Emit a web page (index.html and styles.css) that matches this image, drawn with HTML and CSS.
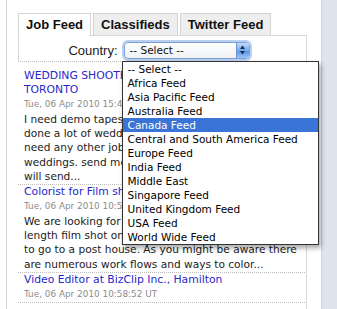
FILE: index.html
```html
<!DOCTYPE html>
<html>
<head>
<meta charset="utf-8">
<title>Job Feed</title>
<link rel="stylesheet" href="styles.css">
</head>
<body>
<div class="page">
  <div class="col">
    <div class="tabs">
      <div class="tab active">Job Feed</div>
      <div class="tab">Classifieds</div>
      <div class="tab">Twitter Feed</div>
    </div>
    <div class="panel">
      <span class="label">Country:</span>
      <div class="select">
        <span class="select-text">-- Select --</span>
        <span class="select-btn"><svg width="5" height="10" viewBox="0 0 5 10"><path d="M0 4 L2.5 0.5 L5 4 Z M0 6 L2.5 9.5 L5 6 Z" fill="#1b2b48"/></svg></span>
        <ul class="dropdown">
          <li>-- Select --</li>
          <li>Africa Feed</li>
          <li>Asia Pacific Feed</li>
          <li>Australia Feed</li>
          <li class="selected">Canada Feed</li>
          <li>Central and South America Feed</li>
          <li>Europe Feed</li>
          <li>India Feed</li>
          <li>Middle East</li>
          <li>Singapore Feed</li>
          <li>United Kingdom Feed</li>
          <li>USA Feed</li>
          <li>World Wide Feed</li>
        </ul>
      </div>
    </div>
    <div class="feed">
      <div class="item">
        <a class="title" href="#">WEDDING SHOOTER &amp; EDITOR WANTED IN<br>TORONTO</a>
        <div class="date">Tue, 06 Apr 2010 15:47:03 UT</div>
        <p class="body">I need demo tapes from someone who has<br>done a lot of weddings before. I do not<br>need any other jobs, just your<br>weddings. send me your reel and I<br>will send...</p>
      </div>
      <div class="item">
        <a class="title" href="#">Colorist for Film shot on RED, Toronto</a>
        <div class="date">Tue, 06 Apr 2010 10:53:41 UT</div>
        <p class="body">We are looking for a colorist for a feature<br>length film shot on RED and we do not want<br>to go to a post house. As you might be aware there<br>are numerous work flows and ways to color...</p>
      </div>
      <div class="item">
        <a class="title" href="#">Video Editor at BizClip Inc., Hamilton</a>
        <div class="date">Tue, 06 Apr 2010 10:58:52 UT</div>
      </div>
    </div>
  </div>
  <div class="strip"></div>
</div>
</body>
</html>
```
FILE: styles.css
```css
* { box-sizing: border-box; }
html, body { margin: 0; padding: 0; height: 100%; overflow: hidden; background: #fff; }
body { font-family: "DejaVu Sans", Verdana, sans-serif; color: #222; }

.page { display: flex; height: 309px; }
.col {
  margin-left: 6px; width: 301px; flex: none;
  border-left: 1px solid #d2d2d2;
  padding: 13px 0 0 11px;
  display: flex; flex-direction: column;
}
.strip { margin-left: 14px; flex: 1; background: #dde4ec; border-left: 1px solid #ccd4de; }

.tabs { display: flex; align-items: flex-end; gap: 2px; }
.tab {
  font: bold 13px/21px "Liberation Sans", Arial, sans-serif; color: #111;
  padding: 0 7px; border: 1px solid #d4d4d4; border-bottom: none; background: #eee;
}
.tab.active { background: #fff; padding-bottom: 1px; margin-bottom: -1px; position: relative; z-index: 1; }

.panel {
  height: 27px; border: 1px solid #d8d8d8; border-bottom: 1px dotted #bdbdbd;
  display: flex; align-items: center; justify-content: center;
  padding: 3px 7px 0 0; gap: 6px;
}
.label { font: 13px/15px "Liberation Sans", Arial, sans-serif; color: #222; }
.select {
  position: relative; width: 126px; height: 17px;
  border: 1px solid #7d9fd3; border-radius: 4px;
  background: linear-gradient(#fff, #eef0f3);
  box-shadow: 0 0 0 2px rgba(130, 168, 228, 0.55);
  display: flex;
}
.select-text { flex: 1; font-size: 10.5px; line-height: 15px; padding-left: 5px; color: #111; white-space: nowrap; }
.select-btn {
  width: 13px; border-radius: 0 3px 3px 0;
  background: linear-gradient(#c4dcf8, #76aaee 50%, #5591e4 51%, #9cc6f6);
  border-left: 1px solid #6b95d0;
  display: flex; align-items: center; justify-content: center;
}
.dropdown {
  position: absolute; left: -3px; top: 18px; width: 197px;
  margin: 0; padding: 0; list-style: none; background: #fff;
  border: 1px solid #333; box-shadow: 2px 3px 5px rgba(0, 0, 0, 0.35);
  z-index: 10;
}
.dropdown li { font-size: 10.5px; line-height: 14px; height: 14px; padding-left: 5px; color: #000; white-space: nowrap; }
.dropdown li.selected { background: #3a74d6; color: #fff; }

.feed { flex: 1; border-right: 1px solid #d8d8d8; padding-top: 7px; }
.item { padding: 0 4px 1px 6px; border-bottom: 1px dotted #bcbcbc; margin-right: 1px; }
.title { display: block; font-size: 10.8px; line-height: 14px; color: #2727c9; text-decoration: none; white-space: nowrap; }
.date { margin-top: 1px; font-size: 8.9px; line-height: 13px; color: #8c8c8c; white-space: nowrap; }
.body { margin: 1px 0 0; font-size: 10.6px; line-height: 14.2px; color: #222; white-space: nowrap; }
```
